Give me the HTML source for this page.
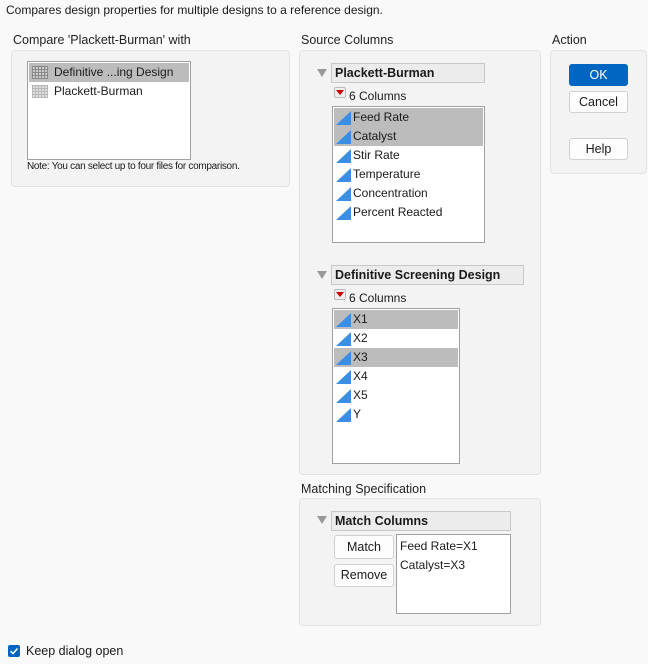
<!DOCTYPE html>
<html><head><style>
body{margin:0;width:648px;height:664px;background:#f9f9f9;font-family:"Liberation Sans",sans-serif;font-size:12px;color:#1a1a1a;position:relative;overflow:hidden}
.a{position:absolute}
.lbl{font-size:12.5px;color:#222}
.panel{position:absolute;background:#f3f3f3;border:1px solid #e3e3e3;border-radius:4px}
.list{position:absolute;background:#fff;border:1px solid #a0a0a0}
.row{position:absolute;left:1px;right:1px;height:19px;line-height:19px;padding-left:19px;font-size:12px}
.sel{background:#bcbcbc}
.tri{position:absolute;left:2px;top:3px;width:0;height:0;border-left:15px solid transparent;border-bottom:14px solid #3a8ee6}
.hdr{position:absolute;background:#ececec;border:1px solid #c8c8c8;font-weight:bold;font-size:12.5px;line-height:18px;padding-left:3px}
.dt{position:absolute;width:0;height:0;border-left:5px solid transparent;border-right:5px solid transparent;border-top:8px solid #999}
.btn{position:absolute;background:#fdfdfd;border:1px solid #d0d0d0;border-radius:3px;text-align:center;line-height:20px;font-size:12.5px}
.red{position:absolute;width:10px;height:9px;border:1px solid #bbb;background:#eee;border-radius:2px}
.red:after{content:"";position:absolute;left:1px;top:2px;border-left:4px solid transparent;border-right:4px solid transparent;border-top:5px solid #c00}
.grid{position:absolute;left:3px;top:3px;width:16px;height:13px;background:repeating-linear-gradient(90deg,#888 0 1px,transparent 1px 3px),repeating-linear-gradient(0deg,#888 0 1px,#ccc 1px 3px)}
</style></head><body>
<div class="a" style="left:6px;top:3px;font-size:12px">Compares design properties for multiple designs to a reference design.</div>

<div class="a lbl" style="left:13px;top:33px">Compare 'Plackett-Burman' with</div>
<div class="panel" style="left:11px;top:50px;width:277px;height:135px"></div>
<div class="list" style="left:27px;top:61px;width:162px;height:97px">
 <div class="row sel" style="top:1px;padding-left:25px"><div class="grid"></div>Definitive ...ing Design</div>
 <div class="row" style="top:20px;padding-left:25px"><div class="grid" style="opacity:.6"></div>Plackett-Burman</div>
</div>
<div class="a" style="left:27px;top:161px;font-size:10px;letter-spacing:-0.3px">Note: You can select up to four files for comparison.</div>

<div class="a lbl" style="left:301px;top:33px">Source Columns</div>
<div class="panel" style="left:299px;top:50px;width:240px;height:423px"></div>
<div class="dt" style="left:317px;top:69px"></div>
<div class="hdr" style="left:331px;top:63px;width:149px;height:18px">Plackett-Burman</div>
<div class="red" style="left:334px;top:87px"></div>
<div class="a" style="left:349px;top:89px">6 Columns</div>
<div class="list" style="left:332px;top:106px;width:151px;height:135px">
 <div class="row sel" style="top:1px"><div class="tri"></div>Feed Rate</div>
 <div class="row sel" style="top:20px"><div class="tri"></div>Catalyst</div>
 <div class="row" style="top:39px"><div class="tri"></div>Stir Rate</div>
 <div class="row" style="top:58px"><div class="tri"></div>Temperature</div>
 <div class="row" style="top:77px"><div class="tri"></div>Concentration</div>
 <div class="row" style="top:96px"><div class="tri"></div>Percent Reacted</div>
</div>
<div class="dt" style="left:317px;top:271px"></div>
<div class="hdr" style="left:331px;top:265px;width:188px;height:18px">Definitive Screening Design</div>
<div class="red" style="left:334px;top:289px"></div>
<div class="a" style="left:349px;top:291px">6 Columns</div>
<div class="list" style="left:332px;top:308px;width:126px;height:154px">
 <div class="row sel" style="top:1px"><div class="tri"></div>X1</div>
 <div class="row" style="top:20px"><div class="tri"></div>X2</div>
 <div class="row sel" style="top:39px"><div class="tri"></div>X3</div>
 <div class="row" style="top:58px"><div class="tri"></div>X4</div>
 <div class="row" style="top:77px"><div class="tri"></div>X5</div>
 <div class="row" style="top:96px"><div class="tri"></div>Y</div>
</div>

<div class="a lbl" style="left:552px;top:33px">Action</div>
<div class="panel" style="left:550px;top:50px;width:95px;height:122px"></div>
<div class="btn" style="left:569px;top:64px;width:57px;height:20px;background:#0066c2;border-color:#0066c2;color:#fff">OK</div>
<div class="btn" style="left:569px;top:91px;width:57px;height:20px">Cancel</div>
<div class="btn" style="left:569px;top:138px;width:57px;height:20px">Help</div>

<div class="a lbl" style="left:301px;top:482px">Matching Specification</div>
<div class="panel" style="left:299px;top:498px;width:240px;height:126px"></div>
<div class="dt" style="left:317px;top:516px"></div>
<div class="hdr" style="left:331px;top:511px;width:175px;height:18px">Match Columns</div>
<div class="btn" style="left:334px;top:535px;width:58px;height:22px;line-height:22px">Match</div>
<div class="btn" style="left:334px;top:564px;width:58px;height:21px;line-height:21px">Remove</div>
<div class="list" style="left:396px;top:534px;width:113px;height:78px">
 <div class="a" style="left:3px;top:4px">Feed Rate=X1</div>
 <div class="a" style="left:3px;top:23px">Catalyst=X3</div>
</div>

<div class="a" style="left:8px;top:645px;width:12px;height:12px;background:#0066c2;border-radius:2px">
<svg width="12" height="12" viewBox="0 0 12 12"><path d="M2.5 6.2L5 8.5L9.5 3.5" stroke="#fff" stroke-width="1.5" fill="none"/></svg></div>
<div class="a" style="left:26px;top:644px;font-size:12.5px">Keep dialog open</div>
</body></html>
